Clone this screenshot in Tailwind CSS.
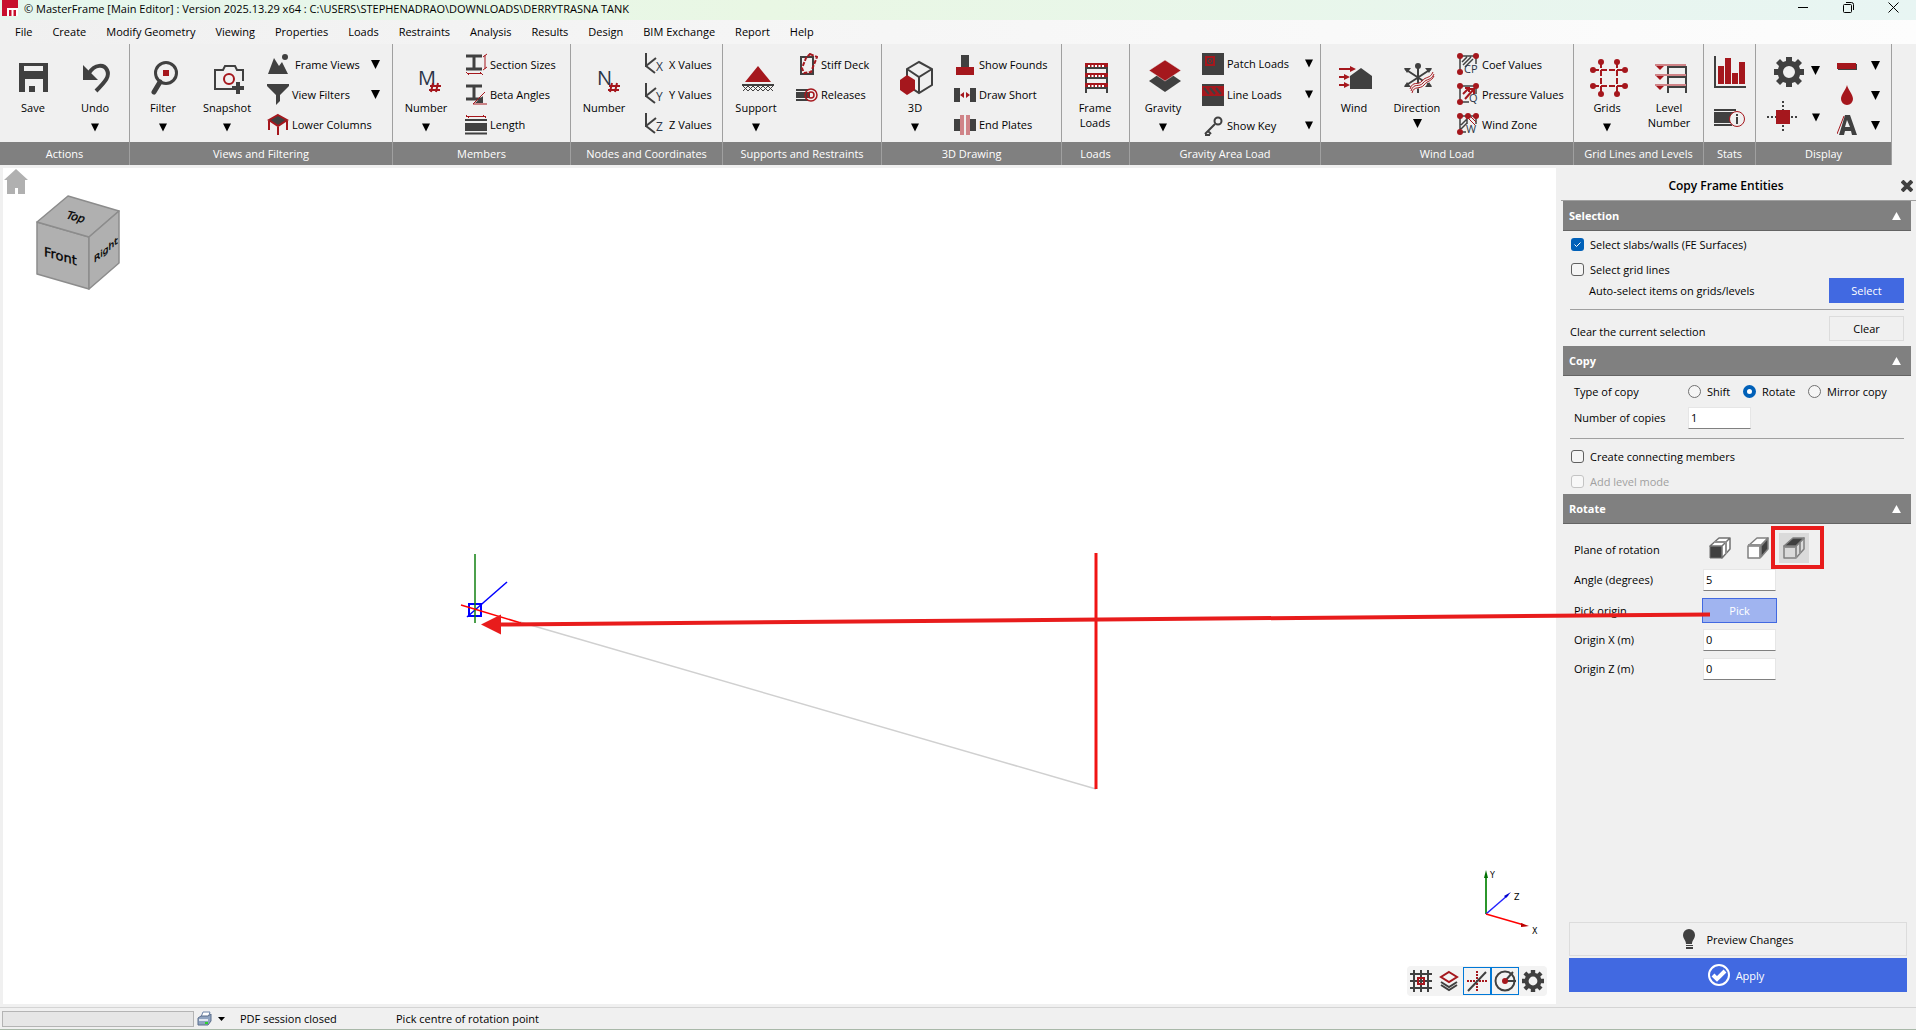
<!DOCTYPE html>
<html lang="en">
<head>
<meta charset="utf-8">
<title>MasterFrame</title>
<script src="https://cdn.jsdelivr.net/npm/@tailwindcss/browser@4"></script>
</head>
<body class="relative flex h-screen flex-col overflow-hidden bg-[#f0f0f0] font-['Open_Sans','Noto_Sans',sans-serif] text-[11px] leading-[15px] text-black">

<svg class="hidden">
  <symbol id="down" viewBox="0 0 9 9"><path d="M0 0h9L4.500 9z" fill="#000"/></symbol>
  <symbol id="up" viewBox="0 0 10 9"><path d="M0 9h10L5 0z" fill="#fff"/></symbol>
  <symbol id="gear" viewBox="0 0 30 30"><path fill="#404040" fill-rule="evenodd" d="M12 0h6v4l3 1 3-3 4 4-3 3 1 3h4v6h-4l-1 3 3 3-4 4-3-3-3 1v4h-6v-4l-3-1-3 3-4-4 3-3-1-3H0v-6h4l1-3-3-3 4-4 3 3 3-1zM15 9a6 6 0 1 0 0 12 6 6 0 0 0 0-12z"/></symbol>
  <symbol id="ibeam" viewBox="0 0 22 22"><path d="M1 3h16M1 16h16M9 3v13" stroke="#404040" stroke-width="3" fill="none"/></symbol>
  <symbol id="axes" viewBox="0 0 22 22"><path d="M2 0v14M2 13l10-8M2 13l9 7" stroke="#404040" stroke-width="2" fill="none"/></symbol>
</svg>

<header class="flex h-5 shrink-0 items-center justify-between bg-linear-to-r from-[#e6f6ee] via-[#e9f7e4] via-40% to-[#e8f5f3]">
  <div class="flex h-full items-center gap-[6px] pl-[2px]">
    <svg class="mt-[-4px] h-4 w-4" viewBox="0 0 16 16"><path fill="#c8102e" d="M0 0h16v16H0z"/><path d="M6 16V9h9v7M10.500 9v7" fill="none" stroke="#fff" stroke-width="2"/></svg>
    <h1 class="-mt-1">© MasterFrame [Main Editor] : Version 2025.13.29 x64 : C:\USERS\STEPHENADRAO\DOWNLOADS\DERRYTRASNA TANK</h1>
  </div>
  <div class="flex h-full items-start">
    <button class="flex w-[45px] justify-center pt-[2px]" aria-label="Minimize"><svg class="h-[11px] w-[11px]" viewBox="0 0 11 11"><path d="M0 5.500h10" stroke="#000"/></svg></button>
    <button class="flex w-[45px] justify-center pt-[2px]" aria-label="Restore"><svg class="h-[11px] w-[11px]" viewBox="0 0 11 11" fill="none" stroke="#000"><rect x=".5" y="2.500" width="8" height="8" rx="1"/><path d="M3 .5h5.500a2 2 0 0 1 2 2V8"/></svg></button>
    <button class="flex w-[45px] justify-center pt-[2px]" aria-label="Close"><svg class="h-[11px] w-[11px]" viewBox="0 0 11 11"><path d="M.5.5l10 10M10.500.5l-10 10" stroke="#000"/></svg></button>
  </div>
</header>

<nav class="flex h-6 shrink-0 items-center gap-5 bg-linear-to-r from-[#f0f0f0] to-[#fdfdfd] pb-[2px] pl-[15px]">
  <a href="#">File</a><a href="#">Create</a><a href="#">Modify Geometry</a><a href="#">Viewing</a><a href="#">Properties</a><a href="#">Loads</a><a href="#">Restraints</a><a href="#">Analysis</a><a href="#">Results</a><a href="#">Design</a><a href="#">BIM Exchange</a><a href="#">Report</a><a href="#">Help</a>
</nav>

<div class="flex h-[121px] shrink-0">
  <section class="flex w-[130px] flex-col border-r border-[#a0a0a0]">
    <div class="flex flex-1 items-start pl-[2px]">
      <button class="flex w-[62px] flex-col items-center pt-[11px]">
        <svg class="h-[45px] w-11" viewBox="0 0 44 45"><path fill="#404040" fill-rule="evenodd" d="M8 8h29v29H8zM13 11v5h19v-5zM14 24v13h18V24z"/><path fill="#404040" d="M18 31h6v6h-6z"/></svg>Save
      </button>
      <button class="flex w-[62px] flex-col items-center pt-[11px]">
        <svg class="h-[45px] w-11" viewBox="0 0 44 45"><path fill="#404040" d="M10 10v15h15z"/><path d="M16 18C22 9 31 9 34 15c3 6-1 11-11 21" fill="none" stroke="#404040" stroke-width="4"/></svg>Undo
        <svg class="mt-2 h-[9px] w-2"><use href="#down"/></svg>
      </button>
    </div>
    <h2 class="flex h-[23px] items-center justify-center bg-[#808080] text-white">Actions</h2>
  </section>

  <section class="flex w-[263px] flex-col border-r border-[#a0a0a0]">
    <div class="flex flex-1 items-start pl-[1px]">
      <button class="flex w-16 flex-col items-center pt-[11px]">
        <svg class="h-[45px] w-11" viewBox="0 0 44 45"><circle cx="25" cy="18" r="10.500" fill="none" stroke="#404040" stroke-width="3"/><path d="M19 27l-6 10" stroke="#404040" stroke-width="5" stroke-linecap="round"/><path fill="#a5171d" d="M22 15h6v6h-6z"/></svg>Filter
        <svg class="mt-2 h-[9px] w-2"><use href="#down"/></svg>
      </button>
      <button class="flex w-16 flex-col items-center pt-[11px]">
        <svg class="h-[45px] w-11" viewBox="0 0 44 45"><path d="M27 34H10V15h8l2-4h10l2 4h6v11" fill="none" stroke="#404040" stroke-width="2"/><circle cx="24" cy="24" r="5" fill="none" stroke="#a5171d" stroke-width="2"/><path d="M33 27v12M27 33h12" stroke="#404040" stroke-width="4"/></svg>Snapshot
        <svg class="mt-2 h-[9px] w-2"><use href="#down"/></svg>
      </button>
      <div class="ml-2 w-[113px] pt-[5px]">
        <button class="flex h-[30px] w-full items-center"><svg class="h-[22px] w-[22px]" viewBox="0 0 22 22"><path fill="#404040" d="M1 21L7 5l5 8 3-4 6 12z"/><circle cx="18" cy="4" r="3" fill="#404040"/></svg><span class="ml-[6px] flex-1 text-left">Frame Views</span><svg class="h-[9px] w-[9px]"><use href="#down"/></svg></button>
        <button class="flex h-[30px] w-full items-center"><svg class="h-[22px] w-[22px]" viewBox="0 0 22 22"><path fill="#404040" d="M0 1h22v2l-9 9v6l-4 4V12L0 3z"/></svg><span class="ml-[3px] flex-1 text-left">View Filters</span><svg class="h-[9px] w-[9px]"><use href="#down"/></svg></button>
        <button class="flex h-[30px] w-full items-center"><svg class="h-[22px] w-[22px]" viewBox="0 0 22 22"><path d="M2 8v9M20 8v9M11 14v8" stroke="#a5171d" stroke-width="2"/><path d="M11 2l9 5-9 6-9-6z" fill="#404040" stroke="#a5171d" stroke-width="2"/></svg><span class="ml-[3px]">Lower Columns</span></button>
      </div>
    </div>
    <h2 class="flex h-[23px] items-center justify-center bg-[#808080] text-white">Views and Filtering</h2>
  </section>

  <section class="flex w-[178px] flex-col border-r border-[#a0a0a0]">
    <div class="flex flex-1 items-start pl-[1px]">
      <button class="flex w-16 flex-col items-center pt-[11px]">
        <svg class="h-[45px] w-11" viewBox="0 0 44 45"><text x="14" y="30" font-size="20" fill="#2b3648">M</text><path d="M29 28l-2 9M34 28l-2 9M26 31h11M25 35h11" stroke="#a5171d" stroke-width="2"/></svg>Number
        <svg class="mt-2 h-[9px] w-2"><use href="#down"/></svg>
      </button>
      <div class="ml-[7px] pt-[5px]">
        <button class="flex h-[30px] items-center gap-[3px]"><svg class="h-[22px] w-[22px]" viewBox="0 0 22 22"><use href="#ibeam" width="22" height="22"/><path d="M20 2v14M18 4l4-3M18 17l4-3M2 20.500h15M1 19l3 3M15 19l3 3" stroke="#a5171d"/></svg>Section Sizes</button>
        <button class="flex h-[30px] items-center gap-[3px]"><svg class="h-[22px] w-[22px]" viewBox="0 0 22 22"><use href="#ibeam" width="22" height="22"/><path d="M10 20l8-7v7z" fill="#404040"/><path d="M8 21L20 9M8 21h14" stroke="#a5171d"/></svg>Beta Angles</button>
        <button class="flex h-[30px] items-center gap-[3px]"><svg class="h-[22px] w-[22px]" viewBox="0 0 22 22"><path d="M0 7h22M0 20.500h22" stroke="#404040" stroke-width="2"/><path d="M0 10h22v8H0z" fill="#404040"/><path d="M1 3.500h20M1 2l3 3M18 2l3 3" stroke="#a5171d"/></svg>Length</button>
      </div>
    </div>
    <h2 class="flex h-[23px] items-center justify-center bg-[#808080] text-white">Members</h2>
  </section>

  <section class="flex w-[152px] flex-col border-r border-[#a0a0a0]">
    <div class="flex flex-1 items-start pl-[1px]">
      <button class="flex w-16 flex-col items-center pt-[11px]">
        <svg class="h-[45px] w-11" viewBox="0 0 44 45"><text x="15" y="30" font-size="20" fill="#2b3648">N</text><path d="M30 28l-2 9M35 28l-2 9M27 31h11M26 35h11" stroke="#a5171d" stroke-width="2"/></svg>Number
      </button>
      <div class="ml-2 pt-[5px]">
        <button class="flex h-[30px] items-center gap-[3px]"><svg class="h-[22px] w-[22px]" viewBox="0 0 22 22"><use href="#axes" width="22" height="22"/><text x="12" y="18" font-size="12" fill="#2b3648">X</text></svg>X Values</button>
        <button class="flex h-[30px] items-center gap-[3px]"><svg class="h-[22px] w-[22px]" viewBox="0 0 22 22"><use href="#axes" width="22" height="22"/><text x="12" y="18" font-size="12" fill="#2b3648">Y</text></svg>Y Values</button>
        <button class="flex h-[30px] items-center gap-[3px]"><svg class="h-[22px] w-[22px]" viewBox="0 0 22 22"><use href="#axes" width="22" height="22"/><text x="12" y="18" font-size="12" fill="#2b3648">Z</text></svg>Z Values</button>
      </div>
    </div>
    <h2 class="flex h-[23px] items-center justify-center bg-[#808080] text-white">Nodes and Coordinates</h2>
  </section>

  <section class="flex w-[159px] flex-col border-r border-[#a0a0a0]">
    <div class="flex flex-1 items-start pl-[1px]">
      <button class="flex w-16 flex-col items-center pt-[11px]">
        <svg class="h-[45px] w-11" viewBox="0 0 44 45"><path fill="#a5171d" d="M24 11l13 16H11z"/><path fill="#404040" d="M8 29h32v2H8z"/><path d="M9 36l5-5 5 5 5-5 5 5 5-5 5 5M9 31l5 5 5-5 5 5 5-5 5 5 5-5" fill="none" stroke="#404040"/></svg>Support
        <svg class="mt-2 h-[9px] w-2"><use href="#down"/></svg>
      </button>
      <div class="ml-2 pt-[5px]">
        <button class="flex h-[30px] items-center gap-[3px]"><svg class="h-[22px] w-[22px]" viewBox="0 0 22 22" fill="none" stroke-width="2"><path stroke="#404040" d="M5 4h12v17H5z"/><path stroke="#a5171d" stroke-dasharray="4 1.500" d="M14 1l7 3-6 15-7 1-2-5 4-10z"/></svg>Stiff Deck</button>
        <button class="flex h-[30px] items-center gap-[3px]"><svg class="h-[22px] w-[22px]" viewBox="0 0 22 22"><path d="M0 7h12M0 17h12" stroke="#404040" stroke-width="2"/><path fill="#404040" d="M0 9h14v6H0z"/><g fill="none" stroke="#a5171d" stroke-width="1.500"><circle cx="15" cy="12" r="6"/><circle cx="15" cy="12" r="3"/></g></svg>Releases</button>
      </div>
    </div>
    <h2 class="flex h-[23px] items-center justify-center bg-[#808080] text-white">Supports and Restraints</h2>
  </section>

  <section class="flex w-[180px] flex-col border-r border-[#a0a0a0]">
    <div class="flex flex-1 items-start pl-[1px]">
      <button class="flex w-16 flex-col items-center pt-[11px]">
        <svg class="h-[45px] w-11" viewBox="0 0 44 45"><path d="M26 7l13 7v16l-13 8-12-8V14zM14 14l12 8 13-8M26 22v16" fill="none" stroke="#404040" stroke-width="2"/><path fill="#a5171d" d="M14 20l8 5v10l-8 5-7-5V25z"/></svg>3D
        <svg class="mt-2 h-[9px] w-2"><use href="#down"/></svg>
      </button>
      <div class="ml-[7px] pt-[5px]">
        <button class="flex h-[30px] items-center gap-[3px]"><svg class="h-[22px] w-[22px]" viewBox="0 0 22 22"><path fill="#404040" d="M7 2h8v12H7z"/><path fill="#a5171d" d="M2 14h18v8H2z"/></svg>Show Founds</button>
        <button class="flex h-[30px] items-center gap-[3px]"><svg class="h-[22px] w-[22px]" viewBox="0 0 22 22"><path fill="#404040" d="M0 5h6v14H0zM16 5h6v14h-6z"/><path fill="#a5171d" d="M10 9v6l-4-3zM12 9v6l4-3z"/></svg>Draw Short</button>
        <button class="flex h-[30px] items-center gap-[3px]"><svg class="h-[22px] w-[22px]" viewBox="0 0 22 22"><path fill="#404040" d="M0 6h7v12H0zM15 6h7v12h-7z"/><path fill="#d08488" d="M6 2h4v20H6zM12 2h4v20h-4z"/></svg>End Plates</button>
      </div>
    </div>
    <h2 class="flex h-[23px] items-center justify-center bg-[#808080] text-white">3D Drawing</h2>
  </section>

  <section class="flex w-[68px] flex-col border-r border-[#a0a0a0]">
    <div class="flex flex-1 items-start pl-[1px]">
      <button class="flex w-16 flex-col items-center pt-[11px]">
        <svg class="h-[45px] w-11" viewBox="0 0 44 45"><path d="M13 9v29M34 9v29M13 13h21M13 23h21M13 33h21" fill="none" stroke="#404040" stroke-width="2"/><path d="M12 10h23M12 20h23M12 30h23" stroke="#a5171d" stroke-width="4"/><path d="M15 11h17M15 21h17M15 31h17" stroke="#fff" stroke-width="2" stroke-dasharray="2 1.500"/></svg>Frame<br>Loads
      </button>
    </div>
    <h2 class="flex h-[23px] items-center justify-center bg-[#808080] text-white">Loads</h2>
  </section>

  <section class="flex w-[191px] flex-col border-r border-[#a0a0a0]">
    <div class="flex flex-1 items-start pl-[1px]">
      <button class="flex w-16 flex-col items-center pt-[11px]">
        <svg class="h-[45px] w-11" viewBox="0 0 44 45"><path fill="#404040" d="M24 15l16 11-16 11L8 26z"/><path fill="#a5171d" stroke="#f0f0f0" stroke-width=".5" d="M24 5l16 10.500L24 26 8 15.500z"/></svg>Gravity
        <svg class="mt-2 h-[9px] w-2"><use href="#down"/></svg>
      </button>
      <div class="ml-[7px] w-[111px] pt-[4px]">
        <button class="flex h-[31px] w-full items-center gap-[3px]"><svg class="h-[22px] w-[22px]" viewBox="0 0 22 22"><path fill="#404040" d="M0 0h22v22H0z"/><path fill="#a5171d" d="M3 3h10v10H3z"/><path d="M5.500 5.500h5v5h-5zM6 6l4 4M10 6l-4 4" fill="none" stroke="#404040"/></svg><span class="flex-1 text-left">Patch Loads</span><svg class="h-[9px] w-2"><use href="#down"/></svg></button>
        <button class="flex h-[31px] w-full items-center gap-[3px]"><svg class="h-[22px] w-[22px]" viewBox="0 0 22 22"><path fill="#404040" d="M0 0h22v22H0z"/><path fill="#a5171d" d="M0 2h22v10H0z"/><path d="M2 4l5 6M8 4l5 6M14 4l5 6" stroke="#404040" stroke-width="2"/></svg><span class="flex-1 text-left">Line Loads</span><svg class="h-[9px] w-2"><use href="#down"/></svg></button>
        <button class="flex h-[31px] w-full items-center gap-[3px]"><svg class="h-[22px] w-[22px]" viewBox="0 0 22 22" fill="none" stroke="#404040" stroke-width="2"><circle cx="16" cy="6" r="3.500"/><path d="M13 9L3 19M3 20h5M6 16l3 3" /></svg><span class="flex-1 text-left">Show Key</span><svg class="h-[9px] w-2"><use href="#down"/></svg></button>
      </div>
    </div>
    <h2 class="flex h-[23px] items-center justify-center bg-[#808080] text-white">Gravity Area Load</h2>
  </section>

  <section class="flex w-[253px] flex-col border-r border-[#a0a0a0]">
    <div class="flex flex-1 items-start pl-[1px]">
      <button class="flex w-16 flex-col items-center pt-[11px]">
        <svg class="h-[45px] w-11" viewBox="0 0 44 45"><path fill="#404040" d="M29 13l11 8v13H18V21z"/><path d="M7 14h14M7 22h8M7 30h8" stroke="#a5171d" stroke-width="2"/><path fill="#a5171d" d="M18 11l6 3-6 3zM12 19l6 3-6 3zM12 27l6 3-6 3z"/></svg>Wind
      </button>
      <button class="flex w-[62px] flex-col items-center pt-[11px]">
        <svg class="h-[45px] w-11" viewBox="0 0 44 45"><path d="M23 10v28M10 14l26 17M36 14L10 31" stroke="#404040" stroke-width="2"/><circle cx="23" cy="11" r="3" fill="#404040"/><path fill="#404040" d="M9 13h7l-4 5zM37 13h-7l4 5zM9 32h7l-4-5zM37 32h-7l4-5z"/><path d="M16 37c3-10 8-3 13-9 3-4 6-2 9-9" fill="none" stroke="#f0f0f0" stroke-width="5"/><path d="M15 34c3-9 8-3 12-8 4-5 8-2 11-9M16 36c3-9 8-3 12-8 4-5 8-2 11-9M17 38c2-8 8-3 12-8 4-5 7-3 10-9" fill="none" stroke="#a5171d"/></svg>Direction
        <svg class="mt-1 h-[9px] w-[9px]"><use href="#down"/></svg>
      </button>
      <div class="ml-[9px] pt-[5px]">
        <button class="flex h-[30px] items-center gap-[3px]"><svg class="h-[22px] w-[22px]" viewBox="0 0 22 22"><path d="M3 3h16v8M3 3v16M6 12l8-8M8 14l8-8M5 9l5-5" fill="none" stroke="#404040" stroke-width="1.500"/><g fill="#a5171d"><circle cx="3" cy="3" r="3"/><circle cx="19" cy="3" r="3"/><circle cx="3" cy="19" r="3"/></g><text x="7" y="20" font-size="11" fill="#2b3648">CP</text></svg>Coef Values</button>
        <button class="flex h-[30px] items-center gap-[3px]"><svg class="h-[22px] w-[22px]" viewBox="0 0 22 22"><path d="M3 3h16v8M3 3v16h9" fill="none" stroke="#404040" stroke-width="1.500"/><path d="M6 11l5-5M8 16l8-9M8 5h4v4M12 6h5v5" fill="none" stroke="#a5171d" stroke-width="2"/><g fill="#a5171d"><circle cx="3" cy="3" r="3"/><circle cx="19" cy="3" r="3"/><circle cx="3" cy="19" r="3"/></g><text x="12" y="19" font-size="11" fill="#2b3648">Q</text></svg>Pressure Values</button>
        <button class="flex h-[30px] items-center gap-[3px]"><svg class="h-[22px] w-[22px]" viewBox="0 0 22 22"><path d="M3 3h16v8M3 3v16h6M10 3v8M4 12l6-6M4 16l6-6" fill="none" stroke="#404040" stroke-width="1.500"/><path d="M11 5l7 7M14 4l5 5" stroke="#a5171d"/><g fill="#a5171d"><circle cx="3" cy="3" r="3"/><circle cx="11" cy="3" r="3"/><circle cx="19" cy="3" r="3"/><circle cx="3" cy="19" r="3"/></g><text x="9" y="20" font-size="11" fill="#2b3648">W</text></svg>Wind Zone</button>
      </div>
    </div>
    <h2 class="flex h-[23px] items-center justify-center bg-[#808080] text-white">Wind Load</h2>
  </section>

  <section class="flex w-[130px] flex-col border-r border-[#a0a0a0]">
    <div class="flex flex-1 items-start pl-[1px]">
      <button class="flex w-16 flex-col items-center pt-[11px]">
        <svg class="h-[45px] w-11" viewBox="0 0 44 45"><g stroke="#a5171d" stroke-width="2"><path d="M8 15h32M8 31h32M16 7v32M32 7v32" stroke-dasharray="6 2"/></g><g fill="#a5171d"><circle cx="8" cy="15" r="3"/><circle cx="8" cy="31" r="3"/><circle cx="40" cy="15" r="3"/><circle cx="40" cy="31" r="3"/><circle cx="16" cy="7" r="3"/><circle cx="32" cy="7" r="3"/><circle cx="16" cy="39" r="3"/><circle cx="32" cy="39" r="3"/></g></svg>Grids
        <svg class="mt-2 h-[9px] w-2"><use href="#down"/></svg>
      </button>
      <button class="flex w-[60px] flex-col items-center pt-[11px]">
        <svg class="h-[45px] w-11" viewBox="0 0 44 45"><path d="M21 38V12h18v26M21 22h18M21 32h18" fill="none" stroke="#404040" stroke-width="2"/><path d="M8 10h31M8 20h31M8 30h31" stroke="#d08488" stroke-width="2"/><path fill="#a5171d" d="M9 11h8l-4 4zM9 21h8l-4 4zM9 31h8l-4 4z"/></svg>Level<br>Number
      </button>
    </div>
    <h2 class="flex h-[23px] items-center justify-center bg-[#808080] text-white">Grid Lines and Levels</h2>
  </section>

  <section class="flex w-[52px] flex-col border-r border-[#a0a0a0]">
    <div class="flex flex-1 flex-col items-center gap-5 pt-3">
      <button aria-label="Statistics"><svg class="h-8 w-8" viewBox="0 0 32 32"><path d="M1 0v31h31" fill="none" stroke="#404040" stroke-width="2"/><path fill="#a5171d" d="M4 10h6v18H4zM11 2h6v26h-6zM18 17h6v11h-6zM25 6h6v22h-6z"/></svg></button>
      <button aria-label="Member info"><svg class="h-5 w-8" viewBox="0 0 32 20"><path d="M0 2h22M0 17h18" stroke="#404040" stroke-width="2"/><path fill="#404040" d="M0 4h20v11H0z"/><circle cx="23" cy="11" r="7.500" fill="#f0f0f0" stroke="#a5171d"/><path d="M23 6v2M23 9v7" stroke="#404040" stroke-width="2"/></svg></button>
    </div>
    <h2 class="flex h-[23px] items-center justify-center bg-[#808080] text-white">Stats</h2>
  </section>

  <section class="flex w-[136px] flex-col border-r border-[#a0a0a0]">
    <div class="flex flex-1 items-start pl-[11px]">
      <div class="flex flex-col items-end gap-[14px] pt-[13px]">
        <button class="flex items-center gap-[7px]" aria-label="Settings"><svg class="h-[30px] w-[30px]"><use href="#gear"/></svg><svg class="mb-[4px] h-[9px] w-[9px]"><use href="#down"/></svg></button>
        <button class="flex items-center gap-[13px]" aria-label="Node display"><svg class="h-8 w-8" viewBox="0 0 32 32"><path d="M16 0v32M0 16h32" stroke="#404040" stroke-width="2" stroke-dasharray="2 2"/><path fill="#a5171d" d="M9 9h14v14H9z"/></svg><svg class="h-[9px] w-2"><use href="#down"/></svg></button>
      </div>
      <div class="ml-[17px] pt-[6px]">
        <button class="flex h-[30px] items-center gap-[14px]" aria-label="Line colour"><svg class="h-5 w-5" viewBox="0 0 20 20"><path fill="#404040" d="M1 9h19v6H1z"/><path fill="#a5171d" d="M0 8h19v6H0z"/></svg><svg class="h-[9px] w-[9px]"><use href="#down"/></svg></button>
        <button class="flex h-[30px] items-center gap-[14px]" aria-label="Fill colour"><svg class="h-5 w-5" viewBox="0 0 20 20"><path fill="#a5171d" d="M10 0c1 5 6 9 6 14a6 6 0 0 1-12 0c0-5 5-9 6-14z"/></svg><svg class="h-[9px] w-[9px]"><use href="#down"/></svg></button>
        <button class="flex h-[30px] items-center gap-[14px]" aria-label="Font"><svg class="h-5 w-5" viewBox="0 0 20 20"><path d="M0 19L7 1" stroke="#a5171d"/><path fill="#404040" fill-rule="evenodd" d="M8 0h5l7 20h-5l-1-4H8l-1 4H2zM10 5l-2 7h5z"/></svg><svg class="h-[9px] w-[9px]"><use href="#down"/></svg></button>
      </div>
    </div>
    <h2 class="flex h-[23px] items-center justify-center bg-[#808080] text-white">Display</h2>
  </section>
</div>

<main class="flex min-h-0 flex-1">
  <div class="relative mt-[3px] mb-[3px] ml-[3px] min-w-0 flex-1 bg-white">
    <svg class="h-full w-full" fill="none">
      <g fill="#b0b0b0">
        <path d="M13 1L25 12h-3v14h-7v-6h-3v6H4V12H1z"/>
        <g stroke="#8c8c8c" stroke-width="1.500" stroke-linejoin="round"><path d="M34 54l52 15v52l-52-15z"/><path d="M34 54l31-26 51 15-30 26z"/><path d="M86 69l30-26v52l-30 26z"/></g>
      </g>
      <g fill="#000" font-family="DejaVu Sans" stroke="#000" stroke-width=".3">
        <text font-size="13" transform="translate(41 88) skewY(16)">Front</text>
        <text font-size="11" transform="translate(62 50) rotate(15) skewX(-14)">Top</text>
        <text font-size="9" transform="translate(91 95) skewY(-40)">Right</text>
      </g>
      <path d="M517 454L1093 621" stroke="#d0d0d0" stroke-width="1.500"/>
      <path d="M1093 385v236" stroke="#f01414" stroke-width="3"/>
      <path d="M464 449l40-35" stroke="#00f" stroke-width="1.500"/>
      <rect x="466" y="436" width="12" height="12" stroke="#00f" stroke-width="2"/>
      <path d="M472 386v69" stroke="#108010" stroke-width="1.500"/>
      <path d="M458 437l60 18" stroke="#f00" stroke-width="1.500"/>
    </svg>
    <svg class="absolute right-[14px] bottom-[62px] h-[76px] w-[62px]" viewBox="0 0 62 76" fill="none">
      <path d="M6 48V8" stroke="#2b962b" stroke-width="2"/><path d="M4 12l2-8 2 8z" fill="#007000"/>
      <path d="M6 48l22-19" stroke="#22f" stroke-width="1.500"/><path d="M24 30l7-4-5 6z" fill="#00c"/>
      <path d="M6 48l38 11" stroke="#f00" stroke-width="1.500"/><path d="M41 57l8 3-8 1z" fill="#b00"/>
      <g fill="#000" font-size="8" font-family="DejaVu Sans"><text x="10" y="12">Y</text><text x="34" y="34">Z</text><text x="52" y="68">X</text></g>
    </svg>
    <div class="absolute right-[9px] bottom-2 flex h-[30px] items-center rounded bg-[#f3f3f3]">
      <button class="flex h-7 w-7 items-center justify-center" aria-label="Grid"><svg class="h-[22px] w-[22px]" viewBox="0 0 22 22" fill="none" stroke-width="2"><path stroke="#404040" d="M4 0v22M11 0v22M18 0v22M0 4h22M0 11h22M0 18h22"/><path stroke="#a5171d" d="M8 8h6v6H8z"/></svg></button>
      <button class="flex h-7 w-7 items-center justify-center" aria-label="Layers"><svg class="h-[22px] w-[22px]" viewBox="0 0 22 22" fill="none" stroke-width="2"><path stroke="#404040" d="M3 12l8 5 8-5M3 15l8 5 8-5"/><path stroke="#a5171d" d="M11 2l8 5-8 5-8-5z"/></svg></button>
      <button class="flex h-7 w-7 items-center justify-center border border-[#0078d7]" aria-label="Snap"><svg class="h-[22px] w-[22px]" viewBox="0 0 22 22"><path stroke="#a5171d" stroke-width="2" stroke-dasharray="2 1" d="M11 1v20M1 11h20"/><path stroke="#404040" stroke-width="2" d="M2 21L20 2"/></svg></button>
      <button class="flex h-7 w-7 items-center justify-center border border-[#0078d7]" aria-label="Polar"><svg class="h-[22px] w-[22px]" viewBox="0 0 22 22"><circle cx="11" cy="11" r="9.500" fill="none" stroke="#404040" stroke-width="2"/><path stroke="#404040" stroke-width="2" d="M11 11l8-9M11 11h11"/><circle cx="11" cy="11" r="3" fill="#a5171d"/></svg></button>
      <button class="flex h-7 w-7 items-center justify-center" aria-label="View settings"><svg class="h-[22px] w-[22px]"><use href="#gear" width="22" height="22"/></svg></button>
    </div>
  </div>

  <aside class="flex w-[360px] shrink-0 flex-col">
    <div class="ml-[5px] flex h-9 items-center border-b border-[#a0a0a0] pt-[6px]">
      <h2 class="flex-1 pr-[10px] text-center text-xs font-semibold">Copy Frame Entities</h2>
      <button class="mr-[3px]" aria-label="Close panel"><svg class="h-3 w-3" viewBox="0 0 12 12"><path d="M1 1l10 10M11 1L1 11" stroke="#404040" stroke-width="4"/></svg></button>
    </div>

    <div class="mr-[5px] ml-[7px]">
      <button class="flex h-[30px] w-full items-center justify-between border-b border-[#646464] bg-[#808080] pr-[10px] pl-[6px] font-bold text-white">Selection<svg class="h-2 w-[9px]"><use href="#up"/></svg></button>
      <div class="h-[115px] pt-[6px] pr-[7px] pl-[7px]">
        <label class="flex h-[15px] items-center gap-[6px] pl-[1px]"><input type="checkbox" checked class="sr-only"><svg class="h-[13px] w-[13px] rounded-[3px] bg-[#0060b8]" viewBox="0 0 13 13"><path d="M3.500 6.500l2 2 4-4" fill="none" stroke="#fff"/></svg>Select slabs/walls (FE Surfaces)</label>
        <label class="mt-[10px] flex h-[15px] items-center gap-[6px] pl-[1px]"><input type="checkbox" class="h-[13px] w-[13px] appearance-none rounded-[3px] border border-[#606060] bg-[#f5f5f5]">Select grid lines</label>
        <div class="mt-[1px] flex h-[25px] items-center justify-between pl-[19px]"><span>Auto-select items on grids/levels</span><button class="h-[25px] w-[75px] bg-[#4169e1] text-white">Select</button></div>
        <hr class="mt-[6px] border-[#a0a0a0]">
        <div class="mt-[6px] flex h-[25px] items-center justify-between"><span class="mt-[5px]">Clear the current selection</span><button class="h-[25px] w-[75px] border border-[#dcdcdc]">Clear</button></div>
      </div>

      <button class="flex h-[30px] w-full items-center justify-between border-b border-[#646464] bg-[#808080] pr-[10px] pl-[6px] font-bold text-white">Copy<svg class="h-2 w-[9px]"><use href="#up"/></svg></button>
      <div class="h-[118px] pt-[8px] pr-[7px] pl-[7px]">
        <div class="flex h-[15px] items-center pl-[4px]">
          <span class="w-[114px]">Type of copy</span>
          <label class="flex w-[55px] items-center gap-[6px]"><input type="radio" name="type" class="h-[13px] w-[13px] appearance-none rounded-full border border-[#707070] bg-[#f5f5f5]">Shift</label>
          <label class="flex w-[65px] items-center gap-[6px]"><input type="radio" name="type" checked class="h-[13px] w-[13px] appearance-none rounded-full border-4 border-[#0060b8] bg-white">Rotate</label>
          <label class="flex items-center gap-[6px]"><input type="radio" name="type" class="h-[13px] w-[13px] appearance-none rounded-full border border-[#707070] bg-[#f5f5f5]">Mirror copy</label>
        </div>
        <div class="mt-[7px] flex h-[23px] items-center pl-[4px]"><label for="copies" class="w-[114px]">Number of copies</label><input id="copies" value="1" class="h-[22px] w-[63px] border border-[#e6e6e6] border-b-[#808080] bg-white px-[2px]"></div>
        <hr class="mt-[9px] border-[#a0a0a0]">
        <label class="mt-[10px] flex h-[15px] items-center gap-[6px] pl-[1px]"><input type="checkbox" class="h-[13px] w-[13px] appearance-none rounded-[3px] border border-[#606060] bg-[#f5f5f5]">Create connecting members</label>
        <label class="mt-[10px] flex h-[15px] items-center gap-[6px] pl-[1px] text-[#a0a0a0]"><input type="checkbox" disabled class="h-[13px] w-[13px] appearance-none rounded-[3px] border border-[#c4c4c4] bg-[#f8f8f8]">Add level mode</label>
      </div>

      <button class="flex h-[30px] w-full items-center justify-between border-b border-[#646464] bg-[#808080] pr-[10px] pl-[6px] font-bold text-white">Rotate<svg class="h-2 w-[9px]"><use href="#up"/></svg></button>
      <div class="flex flex-col pt-[2px] pl-[11px]">
        <div class="flex h-[42px]">
          <span class="w-[131px] pt-4">Plane of rotation</span>
          <div class="flex h-[43px] items-center">
            <button class="flex h-[30px] w-[30px] items-center justify-center" aria-label="Front plane"><svg class="h-[22px] w-[22px]" viewBox="0 0 22 22" stroke="#707070" stroke-linejoin="round"><path fill="#404040" d="M1 9h12v12H1z"/><path fill="#fff" stroke-width="1.500" d="M1 9l9-8h11l-8 8zM13 9l8-8v11l-8 9z"/><path fill="none" stroke-width="2" stroke="#909090" d="M5 5h12v12"/></svg></button>
            <button class="mx-2 flex h-[30px] w-[30px] items-center justify-center" aria-label="Side plane"><svg class="h-[22px] w-[22px]" viewBox="0 0 22 22" stroke="#808080" stroke-linejoin="round" stroke-width="1.500"><path fill="#fff" d="M1 9h12v12H1zM1 9l9-8h11l-8 8z"/><path fill="none" stroke-width="2" stroke="#909090" d="M1 8h12v13"/><path fill="#404040" d="M14 9l7-8v11l-7 8z"/></svg></button>
            <span class="-ml-[10px] flex h-[43px] w-[53px] items-center justify-center border-4 border-[#e81c1c] pr-[7px]"><button class="flex h-[30px] w-[30px] shrink-0 items-center justify-center bg-[#dadada]" aria-label="Top plane"><svg class="h-[22px] w-[22px]" viewBox="0 0 22 22" stroke="#808080" stroke-linejoin="round" stroke-width="1.500"><path fill="#dadada" d="M1 9h12v12H1zM13 9l8-8v11l-8 9z"/><path fill="none" stroke-width="2" stroke="#909090" d="M1 10h12v11M17 5v12"/><path fill="#404040" d="M1 9l9-8h11l-8 8z"/></svg></button></span>
          </div>
        </div>
        <div class="flex h-[23px] items-center"><label for="angle" class="w-[129px]">Angle (degrees)</label><input id="angle" value="5" class="h-[22px] w-[73px] border border-[#e6e6e6] border-b-[#808080] bg-white px-[2px]"></div>
        <div class="mt-[7px] mb-[5px] flex h-[25px] items-center"><span class="w-[128px]">Pick origin</span><button class="h-[25px] w-[75px] border border-[#4169e1] bg-[#a0b4f0] text-white">Pick</button></div>
        <div class="flex h-[23px] items-center"><label for="ox" class="w-[129px]">Origin X (m)</label><input id="ox" value="0" class="h-[22px] w-[73px] border border-[#e6e6e6] border-b-[#808080] bg-white px-[2px]"></div>
        <div class="mt-[6px] flex h-[23px] items-center"><label for="oz" class="w-[129px]">Origin Z (m)</label><input id="oz" value="0" class="h-[22px] w-[73px] border border-[#e6e6e6] border-b-[#808080] bg-white px-[2px]"></div>
      </div>
    </div>

    <div class="mt-auto mr-[9px] mb-[15px] ml-[13px] flex flex-col gap-[2px]">
      <button class="flex h-[34px] items-center justify-center gap-[10px] border border-[#dcdcdc]"><svg class="h-[22px] w-[14px]" viewBox="0 0 14 22" fill="#404040"><path d="M7 1a6 6 0 0 1 6 6c0 4-3 5-3 9H4C4 12 1 11 1 7a6 6 0 0 1 6-6zM4 17h7v1H4zM4 19h7v2H4z"/></svg>Preview Changes</button>
      <button class="flex h-[34px] items-center justify-center gap-[6px] bg-[#4169e1] pr-1 text-white"><svg class="h-[22px] w-[22px]" viewBox="0 0 22 22" fill="none" stroke="#fff"><circle cx="11" cy="11" r="10" stroke-width="2"/><path d="M5 11l4 4 8-8" stroke-width="4"/></svg>Apply</button>
    </div>
  </aside>
</main>

<footer class="flex h-[23px] shrink-0 items-center border-t border-b border-t-[#d4d4d4] border-b-[#a8b8a8] pl-[2px]">
  <div class="h-4 w-[192px] border border-[#b4b4b4] bg-[#e6e6e6]"></div>
  <button class="ml-[3px] flex items-center gap-[6px]" aria-label="Print"><svg class="h-[15px] w-[15px]" viewBox="0 0 15 15"><path fill="#fff" stroke="#6d84a8" d="M4 6l2-5h7l-2 6z"/><path fill="#8fa3c0" stroke="#5b6e8c" d="M1 7l3-2h7l3-2v7l-3 4H1z"/><path fill="#dfe6f0" d="M2 8h9v2H2z"/><path fill="#2bd42b" d="M8 11h3v2H8z"/></svg><svg class="h-[4px] w-[7px]" viewBox="0 0 7 4"><path d="M0 0h7L3.500 4z"/></svg></button>
  <span class="ml-[15px] w-[156px]">PDF session closed</span>
  <span>Pick centre of rotation point</span>
</footer>

<svg class="pointer-events-none absolute inset-0 h-full w-full">
  <path d="M500 624.500L1710 614.500" stroke="#e81c1c" stroke-width="4"/>
  <path d="M481 624.500l20-10v20z" fill="#e81c1c"/>
</svg>
</body>
</html>
